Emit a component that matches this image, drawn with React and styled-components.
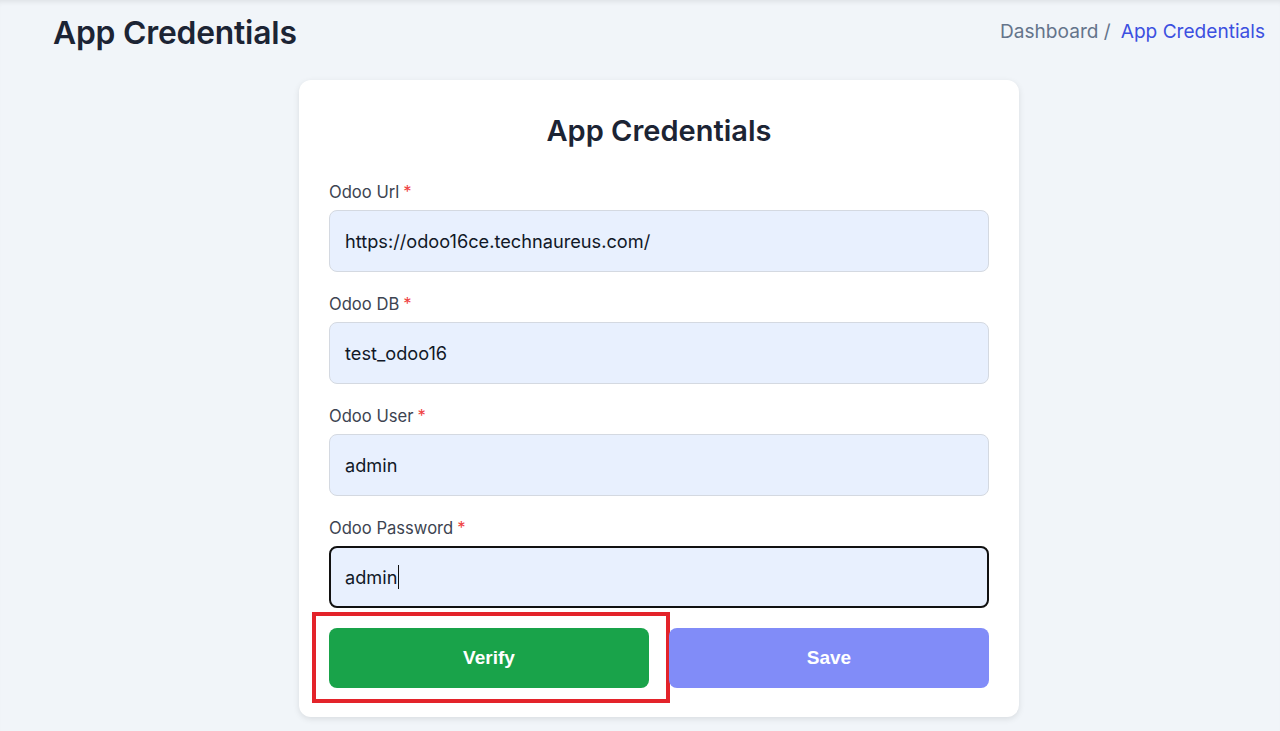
import React from "react";
import styled, { createGlobalStyle } from "styled-components";

const Global = createGlobalStyle`
  html, body { margin: 0; padding: 0; }
  body {
    background: #f1f5f9;
    font-family: Inter, "Open Sans", sans-serif;
    -webkit-font-smoothing: antialiased;
  }
  * { box-sizing: border-box; }
`;

const Page = styled.div`
  min-height: 731px;
  background: #f1f5f9;
  box-shadow: inset 0 5px 5px -3px rgba(0, 0, 0, 0.08);
  padding: 12px 15px 0 53px;
`;

const HeaderRow = styled.div`
  display: flex;
  align-items: center;
  justify-content: space-between;
  height: 40px;
`;

const PageTitle = styled.h1`
  margin: 0;
  font-size: 31.8px;
  font-weight: 600;
  color: #1c2434;
  letter-spacing: -0.2px;
`;

const Breadcrumb = styled.nav`
  display: flex;
  align-items: center;
  gap: 10px;
  font-size: 19.1px;
  font-weight: 400;
  margin-top: -2px;
`;

const Crumb = styled.span`
  color: ${(p) => (p.$active ? "#3c50e0" : "#64748b")};
`;

const Main = styled.div`
  display: flex;
  justify-content: center;
  padding-top: 28px;
`;

const Card = styled.div`
  width: 720px;
  background: #ffffff;
  border-radius: 12px;
  box-shadow: 0 2px 6px rgba(0, 0, 0, 0.1);
  padding: 33px 30px 29px;
`;

const CardTitle = styled.h2`
  margin: 0 0 33px;
  text-align: center;
  font-size: 29px;
  line-height: 36px;
  font-weight: 600;
  color: #1c2434;
`;

const Fields = styled.div`
  display: flex;
  flex-direction: column;
  gap: 22px;
  margin-bottom: 20px;
`;

const Field = styled.div`
  display: flex;
  flex-direction: column;
  gap: 8px;
`;

const Label = styled.label`
  font-size: 16.6px;
  line-height: 20px;
  color: #3d4451;
`;

const Req = styled.span`
  color: #ef4444;
  margin-left: 4px;
`;

const Input = styled.div`
  height: 62px;
  display: flex;
  align-items: center;
  background: #e8f0fe;
  border: ${(p) => (p.$focused ? "2px solid #111" : "1px solid #d4d9e1")};
  padding: 0 ${(p) => (p.$focused ? "14px" : "15px")};
  border-radius: 8px;
  font-size: 18.2px;
  color: #111827;
`;

const Caret = styled.span`
  display: inline-block;
  width: 1px;
  height: 24px;
  background: #111;
  margin-left: 1px;
`;

const Buttons = styled.div`
  display: grid;
  grid-template-columns: 1fr 1fr;
  gap: 20px;
`;

const ButtonWrap = styled.div`
  position: relative;
`;

const Highlight = styled.div`
  position: absolute;
  top: -16px;
  bottom: -15px;
  left: -17px;
  right: -21px;
  border: 4px solid #e3232a;
  pointer-events: none;
`;

const Button = styled.button`
  width: 100%;
  height: 60px;
  border: none;
  border-radius: 8px;
  background: ${(p) => p.$bg};
  color: #ffffff;
  font-family: "Liberation Sans", Arial, sans-serif;
  font-size: 19px;
  font-weight: 700;
  cursor: pointer;
`;

const fields = [
  { label: "Odoo Url", value: "https://odoo16ce.technaureus.com/" },
  { label: "Odoo DB", value: "test_odoo16" },
  { label: "Odoo User", value: "admin" },
  { label: "Odoo Password", value: "admin", focused: true },
];

export default function App() {
  return (
    <>
      <Global />
      <Page>
        <HeaderRow>
          <PageTitle>App Credentials</PageTitle>
          <Breadcrumb>
            <Crumb>Dashboard /</Crumb>
            <Crumb $active>App Credentials</Crumb>
          </Breadcrumb>
        </HeaderRow>
        <Main>
          <Card>
            <CardTitle>App Credentials</CardTitle>
            <Fields>
              {fields.map((f) => (
                <Field key={f.label}>
                  <Label>
                    {f.label}
                    <Req>*</Req>
                  </Label>
                  <Input $focused={f.focused}>
                    {f.value}
                    {f.focused && <Caret />}
                  </Input>
                </Field>
              ))}
            </Fields>
            <Buttons>
              <ButtonWrap>
                <Button $bg="#19a34a">Verify</Button>
                <Highlight />
              </ButtonWrap>
              <ButtonWrap>
                <Button $bg="#818cf8">Save</Button>
              </ButtonWrap>
            </Buttons>
          </Card>
        </Main>
      </Page>
    </>
  );
}
